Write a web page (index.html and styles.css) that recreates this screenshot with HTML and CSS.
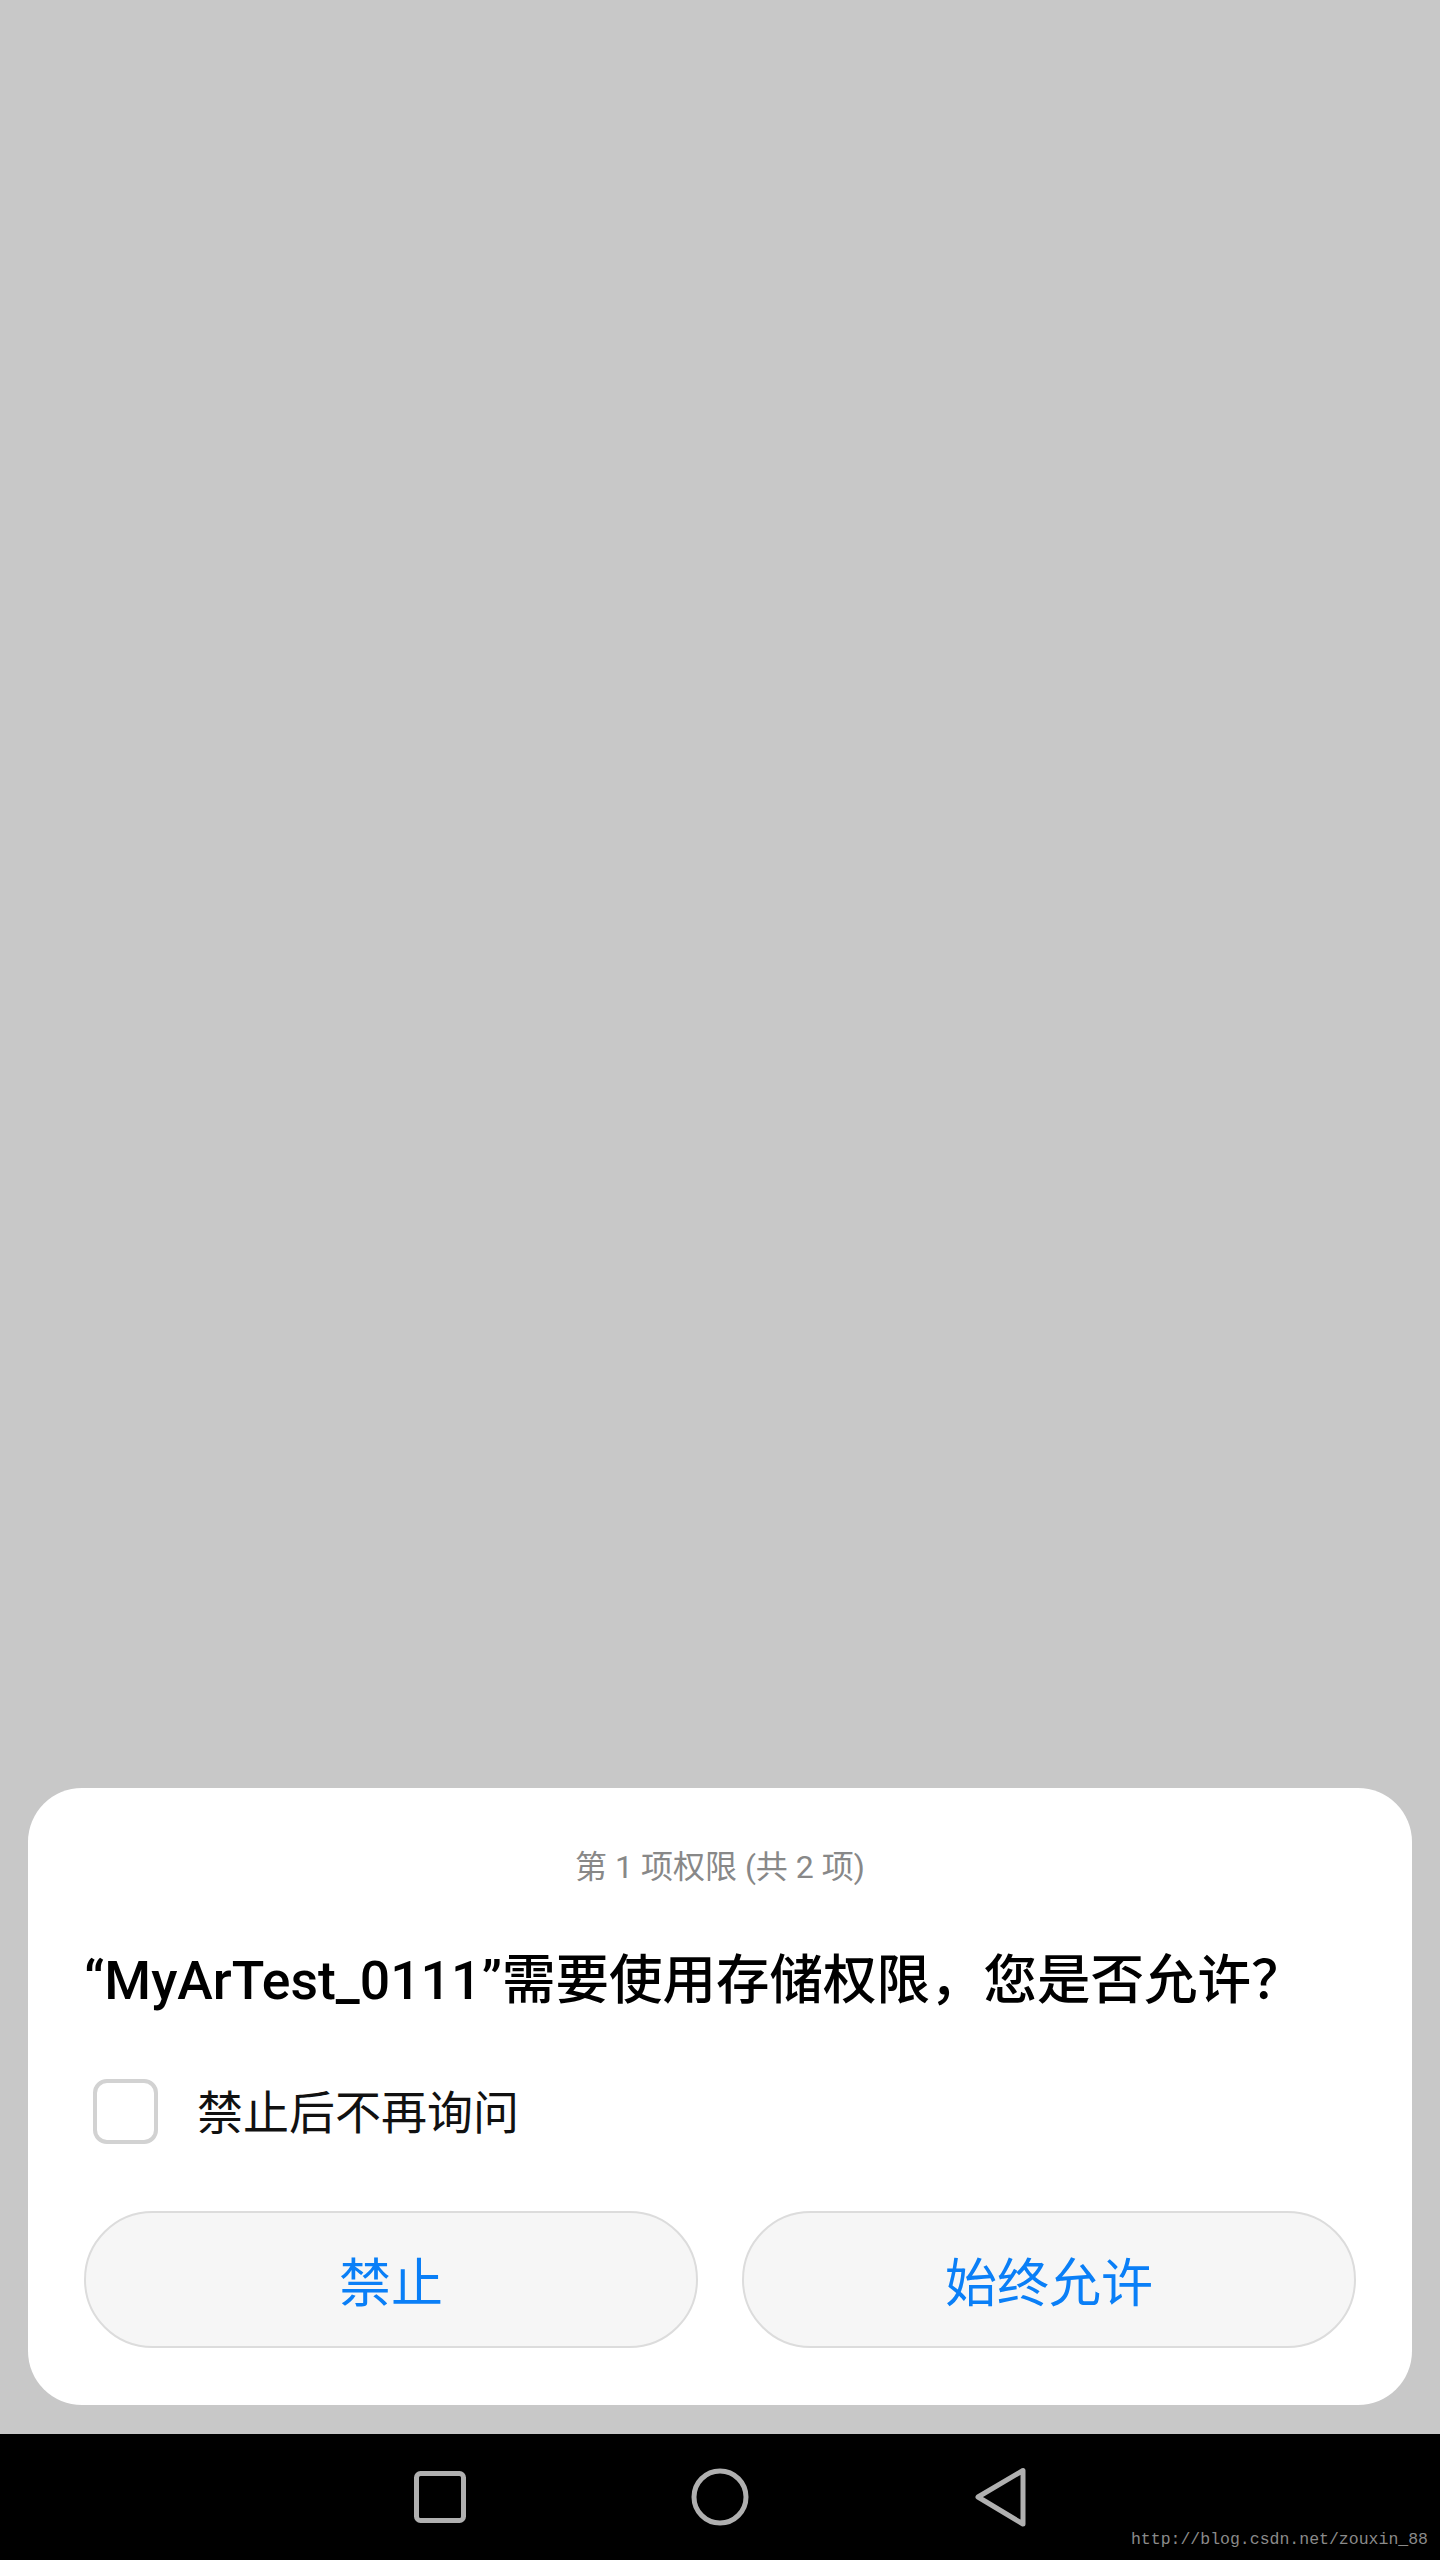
FILE: index.html
```html
<!DOCTYPE html>
<html lang="zh-CN">
<head>
<meta charset="utf-8">
<title>权限请求</title>
<link rel="stylesheet" href="styles.css">
</head>
<body>
<div class="screen">
  <div class="backdrop"></div>
  <div class="dialog">
    <div class="counter">第 1 项权限 (共 2 项)</div>
    <div class="title">“MyArTest_0111”需要使用存储权限，您是否允许？</div>
    <label class="check-row">
      <span class="checkbox"></span>
      <span class="check-label">禁止后不再询问</span>
    </label>
    <div class="actions">
      <button class="btn">禁止</button>
      <button class="btn">始终允许</button>
    </div>
  </div>
  <div class="navbar">
    <svg class="nav-icon" width="60" height="60" viewBox="0 0 60 60">
      <rect x="6.5" y="6.5" width="47" height="47" rx="4" fill="none" stroke="#b0b0b0" stroke-width="5"/>
    </svg>
    <svg class="nav-icon" width="60" height="60" viewBox="0 0 60 60">
      <circle cx="30" cy="30" r="26" fill="none" stroke="#b0b0b0" stroke-width="5"/>
    </svg>
    <svg class="nav-icon" width="60" height="60" viewBox="0 0 60 60">
      <path d="M8 30 L53 3.5 L53 57 Z" fill="none" stroke="#b0b0b0" stroke-width="5" stroke-linejoin="round"/>
    </svg>
    <div class="watermark">http://blog.csdn.net/zouxin_88</div>
  </div>
</div>
</body>
</html>
```

FILE: styles.css
```css
html, body {
  margin: 0;
  padding: 0;
}
body {
  background: #c8c8c8;
  font-family: Roboto, "Noto Sans CJK SC", sans-serif;
}
.screen {
  width: 1440px;
  height: 2560px;
  display: flex;
  flex-direction: column;
  background: #c8c8c8;
}
.backdrop {
  flex: 1;
}
.dialog {
  margin: 0 28px;
  height: 617px;
  box-sizing: border-box;
  background: #ffffff;
  border-radius: 54px;
  padding: 57px 56px 0;
  display: flex;
  flex-direction: column;
}
.counter {
  font-size: 32px;
  line-height: 44px;
  height: 44px;
  color: #888888;
  text-align: center;
}
.title {
  margin-top: 57px;
  font-size: 53.5px;
  line-height: 70px;
  height: 70px;
  font-weight: 500;
  color: #000000;
  white-space: nowrap;
}
.check-row {
  margin-top: 63px;
  height: 65px;
  display: flex;
  align-items: center;
  padding-left: 9px;
}
.checkbox {
  width: 65px;
  height: 65px;
  box-sizing: border-box;
  border: 4px solid #d2d2d2;
  border-radius: 14px;
  flex: none;
}
.check-label {
  margin-left: 39px;
  padding-top: 4px;
  font-size: 46px;
  line-height: 65px;
  color: #111111;
}
.actions {
  margin-top: 67px;
  display: flex;
  gap: 44px;
}
.btn {
  flex: 1;
  height: 137px;
  box-sizing: border-box;
  border: 2px solid #dcdcdc;
  border-radius: 69px;
  background: #f6f6f6;
  color: #0a7ff7;
  font-family: Roboto, "Noto Sans CJK SC", sans-serif;
  font-size: 52px;
  padding: 0;
}
.navbar {
  margin-top: 29px;
  height: 126px;
  background: #000000;
  display: flex;
  align-items: center;
  justify-content: center;
  gap: 220px;
  position: relative;
}
.nav-icon {
  display: block;
  margin-top: -1px;
}
.watermark {
  position: absolute;
  right: 12px;
  bottom: 10px;
  font-family: "Liberation Mono", "DejaVu Sans Mono", monospace;
  font-size: 16.5px;
  line-height: 20px;
  color: #8a8a8a;
}
```
